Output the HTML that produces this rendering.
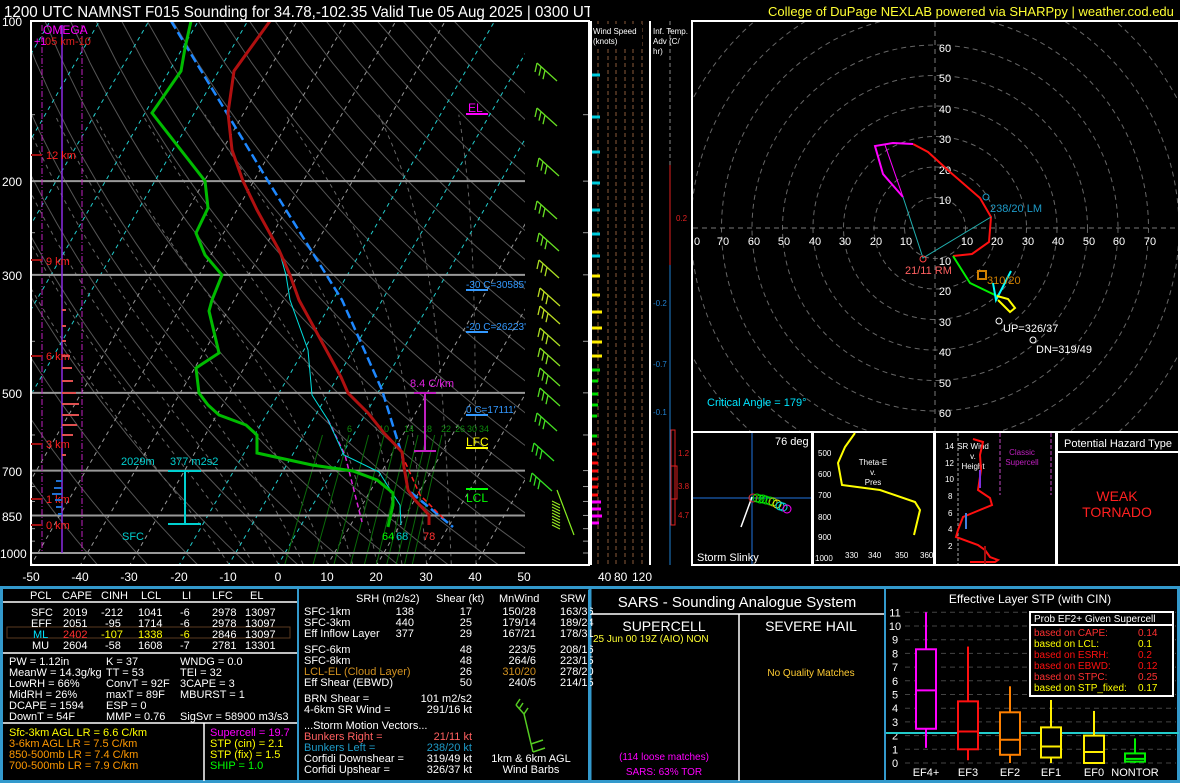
<!DOCTYPE html>
<html><head><meta charset="utf-8">
<style>
html,body{margin:0;padding:0;background:#000;}
svg{display:block;}
text{font-family:"Liberation Sans",sans-serif;}
</style></head>
<body>
<svg id="s" width="1180" height="783" viewBox="0 0 1180 783" xmlns="http://www.w3.org/2000/svg" font-size="11">
<rect width="1180" height="783" fill="#000"/>
<text x="4" y="17" fill="#fff" font-size="16" textLength="600" lengthAdjust="spacingAndGlyphs">1200 UTC NAMNST F015 Sounding for 34.78,-102.35 Valid  Tue 05 Aug 2025 | 0300 UTC</text>
<rect x="590" y="0" width="170" height="20" fill="#000"/>
<text x="768" y="16" fill="#ffff33" font-size="13">College of DuPage NEXLAB powered via SHARPpy | weather.cod.edu</text>

<g id="skew"></g>

<!-- skew-T frame -->
<rect x="31" y="21" width="558" height="544" fill="none" stroke="#fff" stroke-width="2"/>
<g fill="#fff" font-size="12">
<text x="2" y="26">100</text><text x="2" y="186">200</text><text x="2" y="280">300</text>
<text x="2" y="398">500</text><text x="2" y="476">700</text><text x="2" y="521">850</text><text x="0" y="558">1000</text>
<g text-anchor="middle"><text x="31" y="581">-50</text><text x="80" y="581">-40</text><text x="129" y="581">-30</text><text x="179" y="581">-20</text><text x="228" y="581">-10</text><text x="278" y="581">0</text><text x="327" y="581">10</text><text x="376" y="581">20</text><text x="426" y="581">30</text><text x="475" y="581">40</text><text x="524" y="581">50</text></g>
<text x="598" y="581">40</text><text x="614" y="581">80</text><text x="632" y="581">120</text>
</g>

<!-- left omega / heights -->
<line x1="42" y1="25" x2="42" y2="553" stroke="#c020c0" stroke-dasharray="6,2,1,2"/>
<line x1="82" y1="25" x2="82" y2="553" stroke="#c020c0" stroke-dasharray="6,2,1,2"/>
<line x1="62" y1="25" x2="62" y2="553" stroke="#8a2be2" stroke-width="1.5"/>
<text x="43" y="34" fill="#ff00ff" font-size="12">OMEGA</text>
<text x="34" y="45" fill="#ff00ff" font-size="11">+1</text><text x="45" y="45" fill="#e02020" font-size="11">05 km-10</text>
<g fill="#ff2020" font-size="11">
<text x="46" y="159">12 km</text><text x="46" y="265">9 km</text><text x="46" y="360">6 km</text><text x="46" y="448">3 km</text><text x="46" y="503">1 km</text><text x="46" y="529">0 km</text></g>
<g stroke="#a01010" stroke-width="2"><line x1="31" y1="155" x2="42" y2="155"/><line x1="31" y1="260" x2="42" y2="260"/><line x1="31" y1="356" x2="42" y2="356"/><line x1="31" y1="444" x2="42" y2="444"/><line x1="31" y1="499" x2="42" y2="499"/><line x1="31" y1="525" x2="42" y2="525"/></g>
<g stroke="#e05050" stroke-width="2"><line x1="62" y1="310" x2="66" y2="310"/><line x1="62" y1="326" x2="66" y2="326"/><line x1="62" y1="341" x2="66" y2="341"/><line x1="62" y1="356" x2="70" y2="356"/><line x1="62" y1="368" x2="72" y2="368"/><line x1="62" y1="381" x2="73" y2="381"/><line x1="62" y1="393" x2="76" y2="393"/><line x1="62" y1="404" x2="79" y2="404"/><line x1="62" y1="415" x2="79" y2="415"/><line x1="62" y1="425" x2="77" y2="425"/><line x1="62" y1="435" x2="73" y2="435"/><line x1="62" y1="455" x2="66" y2="455"/></g>
<g stroke="#2070d0" stroke-width="2"><line x1="56" y1="481" x2="62" y2="481"/><line x1="54" y1="488" x2="62" y2="488"/><line x1="52" y1="494" x2="62" y2="494"/><line x1="55" y1="500" x2="62" y2="500"/><line x1="56" y1="507" x2="62" y2="507"/><line x1="58" y1="514" x2="62" y2="514"/></g>

<!-- annotations -->
<text x="468" y="112" fill="#ff00ff" font-size="12">EL</text><line x1="466" y1="114" x2="488" y2="114" stroke="#ff00ff" stroke-width="2"/>
<text x="466" y="288" fill="#3399ff" font-size="10">-30 C=30585'</text><line x1="466" y1="290" x2="488" y2="290" stroke="#3399ff" stroke-width="2"/>
<text x="466" y="330" fill="#3399ff" font-size="10">-20 C=26223'</text><line x1="466" y1="332" x2="488" y2="332" stroke="#3399ff" stroke-width="2"/>
<text x="466" y="413" fill="#3399ff" font-size="10">0 C=17111'</text><line x1="466" y1="415" x2="488" y2="415" stroke="#3399ff" stroke-width="2"/>
<text x="466" y="446" fill="#ffff00" font-size="12">LFC</text><line x1="466" y1="448" x2="488" y2="448" stroke="#ffff00" stroke-width="2"/>
<text x="466" y="502" fill="#00ff00" font-size="12">LCL</text><line x1="466" y1="489" x2="488" y2="489" stroke="#00ff00" stroke-width="2"/>
<text x="410" y="387" fill="#e020e0" font-size="11">8.4 C/km</text>
<g stroke="#c020c0" stroke-width="2"><line x1="414" y1="393" x2="436" y2="393"/><line x1="425" y1="393" x2="425" y2="451"/><line x1="414" y1="451" x2="436" y2="451"/></g>
<text x="121" y="465" fill="#00d0d0" font-size="11">2029m</text><text x="170" y="465" fill="#00d0d0" font-size="11">377 m2s2</text>
<g stroke="#00d0d0" stroke-width="2"><line x1="168" y1="471" x2="201" y2="471"/><line x1="185" y1="471" x2="185" y2="524"/><line x1="168" y1="524" x2="201" y2="524"/></g>
<text x="122" y="540" fill="#00d0d0" font-size="11">SFC</text>
<text x="382" y="540" fill="#00ff00" font-size="11">64</text><text x="396" y="540" fill="#00d0d0" font-size="11">68</text><text x="423" y="540" fill="#ff3030" font-size="11">78</text>

<!-- wind speed panel -->
<line x1="591" y1="21" x2="591" y2="565" stroke="#fff" stroke-width="2"/>
<line x1="650" y1="21" x2="650" y2="565" stroke="#fff" stroke-width="2"/>
<g stroke="#8a5a3a" stroke-dasharray="4,3"><line x1="598" y1="21" x2="598" y2="565"/><line x1="608" y1="21" x2="608" y2="565"/><line x1="616" y1="21" x2="616" y2="565"/><line x1="625" y1="21" x2="625" y2="565"/><line x1="633" y1="21" x2="633" y2="565"/><line x1="642" y1="21" x2="642" y2="565"/></g>
<rect x="592" y="24" width="50" height="24" fill="#000"/>
<text x="593" y="34" fill="#fff" font-size="8">Wind Speed</text><text x="593" y="44" fill="#fff" font-size="8">(knots)</text>
<g id="ws"></g>
<!-- temp adv panel -->
<line x1="670" y1="21" x2="670" y2="565" stroke="#888" stroke-dasharray="4,3"/>
<text x="653" y="34" fill="#fff" font-size="8">Inf. Temp.</text><text x="653" y="44" fill="#fff" font-size="8">Adv (C/</text><text x="653" y="54" fill="#fff" font-size="8">hr)</text>
<line x1="670" y1="165" x2="670" y2="265" stroke="#e02020" stroke-width="1"/>
<line x1="670" y1="265" x2="670" y2="565" stroke="#2080d0" stroke-width="1"/>
<text x="676" y="221" fill="#e02020" font-size="8">0.2</text>
<text x="653" y="306" fill="#2080d0" font-size="8">-0.2</text><text x="653" y="367" fill="#2080d0" font-size="8">-0.7</text><text x="653" y="415" fill="#2080d0" font-size="8">-0.1</text>
<rect x="671" y="430" width="4" height="95" fill="none" stroke="#e02020"/>
<rect x="671" y="466" width="6" height="33" fill="none" stroke="#e02020"/>
<text x="678" y="456" fill="#e02020" font-size="8">1.2</text><text x="678" y="489" fill="#e02020" font-size="8">3.8</text><text x="678" y="518" fill="#e02020" font-size="8">4.7</text>

<!-- hodograph -->
<rect x="692" y="21" width="487" height="411" fill="none" stroke="#fff" stroke-width="2"/>
<g id="hodo"></g>
<g fill="#fff" font-size="11" text-anchor="middle">
<text x="945" y="52">60</text><text x="945" y="82">50</text><text x="945" y="113">40</text><text x="945" y="143">30</text><text x="945" y="174">20</text><text x="945" y="204">10</text>
<text x="945" y="265">10</text><text x="945" y="295">20</text><text x="945" y="326">30</text><text x="945" y="356">40</text><text x="945" y="387">50</text><text x="945" y="417">60</text>
<text x="723" y="245">70</text><text x="754" y="245">60</text><text x="784" y="245">50</text><text x="815" y="245">40</text><text x="845" y="245">30</text><text x="876" y="245">20</text><text x="906" y="245">10</text>
<text x="967" y="245">10</text><text x="997" y="245">20</text><text x="1028" y="245">30</text><text x="1058" y="245">40</text><text x="1089" y="245">50</text><text x="1119" y="245">60</text><text x="1150" y="245">70</text><text x="697" y="245">0</text>
</g>
<g fill="none" stroke-width="2">
<polyline points="953,256 972,254 989,242 991,217 980,198 950,172 928,152 913,144" stroke="#ff1010"/>
<polyline points="913,144 893,143 875,146 883,174 903,197" stroke="#ff00ff"/>
<polyline points="953,256 970,283 997,296" stroke="#00ee00"/>
<polyline points="993,283 996,300 1011,271" stroke="#00ffff"/>
<polyline points="997,296 1008,299 1015,308 1010,312 998,300" stroke="#ffff00"/>
</g>
<line x1="885" y1="145" x2="903" y2="197" stroke="#ff00ff"/>
<polyline points="903,197 923,258 991,217" fill="none" stroke="#20b0b0"/>
<circle cx="923" cy="259" r="3" fill="none" stroke="#ff4040"/>
<text x="905" y="274" fill="#ff6060">21/11 RM</text>
<circle cx="986" cy="197" r="3" fill="none" stroke="#1e9bc8"/>
<text x="990" y="212" fill="#1e9bc8">238/20 LM</text>
<rect x="978" y="271" width="8" height="8" fill="none" stroke="#d08000" stroke-width="2"/>
<text x="987" y="284" fill="#d08000">310/20</text>
<circle cx="999" cy="321" r="3" fill="none" stroke="#fff"/><text x="1003" y="332" fill="#fff">UP=326/37</text>
<circle cx="1033" cy="340" r="3" fill="none" stroke="#fff"/><text x="1036" y="353" fill="#fff">DN=319/49</text>
<text x="707" y="406" fill="#00e5ff">Critical Angle = 179°</text>

<!-- insets -->
<g fill="none" stroke="#fff" stroke-width="2">
<rect x="692" y="432" width="120" height="133"/><rect x="813" y="432" width="121" height="133"/><rect x="935" y="432" width="121" height="133"/><rect x="1057" y="432" width="122" height="133"/>
</g>
<line x1="752" y1="433" x2="752" y2="564" stroke="#103a70" stroke-width="2"/>
<line x1="693" y1="498" x2="811" y2="498" stroke="#103a70" stroke-width="2"/>
<line x1="741" y1="527" x2="752" y2="497" stroke="#fff" stroke-width="1.5"/>
<g fill="none" stroke-width="1">
<circle cx="753" cy="498" r="4" stroke="#e03030"/><circle cx="757" cy="498" r="4" stroke="#00ee00"/><circle cx="760" cy="499" r="4" stroke="#00ee00"/><circle cx="763" cy="499" r="4" stroke="#00ee00"/><circle cx="766" cy="500" r="4" stroke="#00ee00"/><circle cx="770" cy="501" r="4" stroke="#00ee00"/><circle cx="773" cy="502" r="4" stroke="#aacc00"/><circle cx="777" cy="504" r="4" stroke="#ffff00"/><circle cx="780" cy="506" r="4" stroke="#00e0e0"/><circle cx="783" cy="507" r="4" stroke="#00e0e0"/><circle cx="787" cy="509" r="4" stroke="#ff00ff"/></g>
<text x="775" y="445" fill="#fff">76 deg</text>
<text x="697" y="561" fill="#fff">Storm Slinky</text>
<polyline points="855,433 845,447 838,463 842,485 880,490 915,502 920,510 914,535" fill="none" stroke="#ffff00" stroke-width="2"/>
<g fill="#fff" font-size="8"><text x="818" y="456">500</text><text x="818" y="477">600</text><text x="818" y="498">700</text><text x="818" y="520">800</text><text x="818" y="540">900</text><text x="815" y="561">1000</text>
<text x="845" y="558">330</text><text x="868" y="558">340</text><text x="895" y="558">350</text><text x="920" y="558">360</text>
<text x="873" y="465" text-anchor="middle">Theta-E</text><text x="873" y="475" text-anchor="middle">v.</text><text x="873" y="485" text-anchor="middle">Pres</text>
<text x="945" y="449">14</text><text x="945" y="466">12</text><text x="945" y="482">10</text><text x="948" y="499">8</text><text x="948" y="516">6</text><text x="948" y="532">4</text><text x="948" y="549">2</text>
<text x="973" y="449" text-anchor="middle">SR Wind</text><text x="973" y="459" text-anchor="middle">v.</text><text x="973" y="469" text-anchor="middle">Height</text></g>
<line x1="958" y1="433" x2="958" y2="564" stroke="#aaa" stroke-dasharray="3,2"/>
<line x1="1000" y1="433" x2="1000" y2="495" stroke="#803080" stroke-dasharray="4,2" stroke-width="1.5"/>
<line x1="1051" y1="433" x2="1051" y2="495" stroke="#803080" stroke-dasharray="4,2" stroke-width="1.5"/>
<text x="1022" y="455" fill="#c020c0" font-size="8" text-anchor="middle">Classic</text><text x="1022" y="465" fill="#c020c0" font-size="8" text-anchor="middle">Supercell</text>
<polyline points="973,439 983,442 980,455 981,470 978,490 990,498 992,505 975,512 963,517 958,530 956,537 978,545 985,550 990,557 998,560 995,562 970,562" fill="none" stroke="#ff1010" stroke-width="2"/>
<line x1="966" y1="513" x2="966" y2="529" stroke="#4080e0" stroke-width="2"/>
<line x1="980" y1="470" x2="980" y2="488" stroke="#8030e0" stroke-width="2"/>
<line x1="985" y1="546" x2="985" y2="564" stroke="#a01010" stroke-width="2"/>
<text x="1118" y="447" fill="#fff" font-size="11" text-anchor="middle">Potential Hazard Type</text>
<line x1="1057" y1="452" x2="1179" y2="452" stroke="#fff" stroke-width="2"/>
<text x="1117" y="501" fill="#ff2020" font-size="14" text-anchor="middle">WEAK</text>
<text x="1117" y="517" fill="#ff2020" font-size="14" text-anchor="middle">TORNADO</text>

<!-- bottom panel -->
<rect x="1.5" y="587.5" width="1177" height="194" fill="#000" stroke="#3399cc" stroke-width="3"/>
<line x1="298" y1="587" x2="298" y2="783" stroke="#3399cc" stroke-width="2"/>
<line x1="590" y1="587" x2="590" y2="783" stroke="#3399cc" stroke-width="3"/>
<line x1="885" y1="587" x2="885" y2="783" stroke="#3399cc" stroke-width="2"/>
<g stroke="#fff" stroke-width="1.5"><line x1="3" y1="602" x2="297" y2="602"/><line x1="3" y1="653" x2="297" y2="653"/><line x1="3" y1="723" x2="297" y2="723"/><line x1="204" y1="723" x2="204" y2="781"/>
<line x1="591" y1="614" x2="884" y2="614"/><line x1="739" y1="614" x2="739" y2="781"/></g>
<rect x="7" y="627" width="283" height="11" fill="none" stroke="#5a3a20"/>
<g font-size="11" fill="#fff">
<text x="30" y="599">PCL</text><text x="62" y="599">CAPE</text><text x="101" y="599">CINH</text><text x="141" y="599">LCL</text><text x="182" y="599">LI</text><text x="212" y="599">LFC</text><text x="250" y="599">EL</text>
<text x="31" y="616">SFC</text><text x="63" y="616">2019</text><text x="101" y="616">-212</text><text x="138" y="616">1041</text><text x="180" y="616">-6</text><text x="212" y="616">2978</text><text x="245" y="616">13097</text>
<text x="31" y="627">EFF</text><text x="63" y="627">2051</text><text x="105" y="627">-95</text><text x="138" y="627">1714</text><text x="180" y="627">-6</text><text x="212" y="627">2978</text><text x="245" y="627">13097</text>
<text x="33" y="638" fill="#00e5ff">ML</text><text x="63" y="638" fill="#ff3030">2402</text><text x="101" y="638" fill="#ffff00">-107</text><text x="138" y="638" fill="#ffff00">1338</text><text x="180" y="638" fill="#ffff00">-6</text><text x="212" y="638">2846</text><text x="245" y="638">13097</text>
<text x="32" y="649">MU</text><text x="63" y="649">2604</text><text x="105" y="649">-58</text><text x="138" y="649">1608</text><text x="180" y="649">-7</text><text x="212" y="649">2781</text><text x="245" y="649">13301</text>
<text x="9" y="665">PW = 1.12in</text><text x="106" y="665">K = 37</text><text x="180" y="665">WNDG = 0.0</text>
<text x="9" y="676">MeanW = 14.3g/kg</text><text x="106" y="676">TT = 53</text><text x="180" y="676">TEI = 32</text>
<text x="9" y="687">LowRH = 66%</text><text x="106" y="687">ConvT = 92F</text><text x="180" y="687">3CAPE = 3</text>
<text x="9" y="698">MidRH = 26%</text><text x="106" y="698">maxT = 89F</text><text x="180" y="698">MBURST = 1</text>
<text x="9" y="709">DCAPE = 1594</text><text x="106" y="709">ESP = 0</text>
<text x="9" y="720">DownT = 54F</text><text x="106" y="720">MMP = 0.76</text><text x="180" y="720">SigSvr = 58900 m3/s3</text>
<text x="9" y="736" fill="#ffff00">Sfc-3km AGL LR = 6.6 C/km</text>
<text x="9" y="747" fill="#ff9900">3-6km AGL LR = 7.5 C/km</text>
<text x="9" y="758" fill="#ff9900">850-500mb LR = 7.4 C/km</text>
<text x="9" y="769" fill="#ff9900">700-500mb LR = 7.9 C/km</text>
<text x="210" y="736" fill="#ff00ff">Supercell = 19.7</text>
<text x="210" y="747" fill="#ffff00">STP (cin) = 2.1</text>
<text x="210" y="758" fill="#ffff00">STP (fix) = 1.5</text>
<text x="210" y="769" fill="#00ff00">SHIP = 1.0</text>
</g>
<g font-size="11" fill="#fff">
<text x="356" y="602">SRH (m2/s2)</text><text x="436" y="602">Shear (kt)</text><text x="499" y="602">MnWind</text><text x="560" y="602">SRW</text>
<text x="304" y="615">SFC-1km</text><text x="304" y="626">SFC-3km</text><text x="304" y="637">Eff Inflow Layer</text>
<text x="304" y="653">SFC-6km</text><text x="304" y="664">SFC-8km</text><text x="304" y="675" fill="#d09020">LCL-EL (Cloud Layer)</text><text x="304" y="686">Eff Shear (EBWD)</text>
<text x="304" y="702">BRN Shear =</text><text x="304" y="713">4-6km SR Wind =</text>
<text x="304" y="729">...Storm Motion Vectors...</text>
<text x="304" y="740" fill="#ff6060">Bunkers Right =</text><text x="304" y="751" fill="#1e9bc8">Bunkers Left =</text>
<text x="304" y="762">Corfidi Downshear =</text><text x="304" y="773">Corfidi Upshear =</text>
<g text-anchor="end">
<text x="414" y="615">138</text><text x="414" y="626">440</text><text x="414" y="637">377</text>
<text x="472" y="615">17</text><text x="472" y="626">25</text><text x="472" y="637">29</text><text x="472" y="653">48</text><text x="472" y="664">48</text><text x="472" y="675">26</text><text x="472" y="686">50</text>
<text x="536" y="615">150/28</text><text x="536" y="626">179/14</text><text x="536" y="637">167/21</text><text x="536" y="653">223/5</text><text x="536" y="664">264/6</text><text x="536" y="675" fill="#d09020">310/20</text><text x="536" y="686">240/5</text>
<text x="472" y="702">101 m2/s2</text><text x="472" y="713">291/16 kt</text>
<text x="472" y="740" fill="#ff6060">21/11 kt</text><text x="472" y="751" fill="#1e9bc8">238/20 kt</text><text x="472" y="762">319/49 kt</text><text x="472" y="773">326/37 kt</text>
</g>
<text x="560" y="615">163/36</text><text x="560" y="626">189/24</text><text x="560" y="637">178/31</text><text x="560" y="653">208/16</text><text x="560" y="664">223/15</text><text x="560" y="675">278/20</text><text x="560" y="686">214/15</text>
<text x="531" y="762" text-anchor="middle">1km &amp; 6km AGL</text><text x="531" y="773" text-anchor="middle">Wind Barbs</text>
</g>
<rect x="588" y="590" width="2" height="190" fill="#3399cc"/>
<g stroke="#55cc22" fill="none" stroke-width="1.5"><polyline points="533,752 524,714 516,705"/><line x1="516" y1="705" x2="520" y2="699"/><line x1="519" y1="709" x2="523" y2="703"/><line x1="524" y1="714" x2="528" y2="708"/><line x1="533" y1="752" x2="545" y2="748"/><line x1="531" y1="744" x2="543" y2="740"/></g>
<!-- SARS -->
<g fill="#fff" text-anchor="middle">
<text x="737" y="607" font-size="15">SARS - Sounding Analogue System</text>
<text x="664" y="631" font-size="14">SUPERCELL</text><text x="811" y="631" font-size="14">SEVERE HAIL</text>
<text x="811" y="676" font-size="10" fill="#ffcc33">No Quality Matches</text>
<text x="664" y="760" font-size="10" fill="#ff00ff">(114 loose matches)</text>
<text x="664" y="775" font-size="10" fill="#ff00ff">SARS: 63% TOR</text>
<text x="1030" y="603" font-size="12">Effective Layer STP (with CIN)</text>
</g>
<text x="593" y="642" font-size="10" fill="#ffff33">25 Jun 00 19Z (AIO)    NON</text>
<g id="stp"></g>
<rect x="1030" y="612" width="143" height="84" fill="#000" stroke="#fff" stroke-width="2"/>
<line x1="1031" y1="625" x2="1172" y2="625" stroke="#fff" stroke-width="2"/>
<g font-size="10">
<text x="1034" y="622" fill="#fff">Prob EF2+ Given Supercell</text>
<text x="1034" y="636" fill="#ff3030">based on CAPE:</text><text x="1138" y="636" fill="#ff3030">0.14</text>
<text x="1034" y="647" fill="#ffff00">based on LCL:</text><text x="1138" y="647" fill="#ffff00">0.1</text>
<text x="1034" y="658" fill="#ff1010">based on ESRH:</text><text x="1138" y="658" fill="#ff1010">0.2</text>
<text x="1034" y="669" fill="#ff1010">based on EBWD:</text><text x="1138" y="669" fill="#ff1010">0.12</text>
<text x="1034" y="680" fill="#ff3030">based on STPC:</text><text x="1138" y="680" fill="#ff3030">0.25</text>
<text x="1034" y="691" fill="#ffff00">based on STP_fixed:</text><text x="1138" y="691" fill="#ffff00">0.17</text>
</g>
</svg>
<script>
var NS="http://www.w3.org/2000/svg";
function el(p,t,a){var e=document.createElementNS(NS,t);for(var k in a)e.setAttribute(k,a[k]);p.appendChild(e);return e;}
function Y(p){return 21+532*Math.log10(p/100);}
function X(T,p){return 278+4.94*T+0.58*(565-Y(p));}
var sk=document.getElementById('skew');
el(sk,'clipPath',{id:'cp'}).appendChild(document.createElementNS(NS,'rect'));
var cr=sk.querySelector('clipPath rect');cr.setAttribute('x',31);cr.setAttribute('y',21);cr.setAttribute('width',494);cr.setAttribute('height',544);
var g=el(sk,'g',{'clip-path':'url(#cp)'});
for(var th=-40;th<=200;th+=10){var pts=[];for(var p=1060;p>=100;p-=20){var T=(th+273.15)*Math.pow(p/1000,0.286)-273.15;pts.push(X(T,p).toFixed(1)+','+Y(p).toFixed(1));}
el(g,'polyline',{points:pts.join(' '),fill:'none',stroke:'#555','stroke-width':1});}
function es(T){return 6.112*Math.exp(17.67*T/(T+243.5));}
for(var t0=-10;t0<=40;t0+=5){var T=t0,pts=[];for(var p=1050;p>=150;p-=10){pts.push(X(T,p).toFixed(1)+','+Y(p).toFixed(1));var Tk=T+273.15,e=es(T),w=0.622*e/(p-e),Lv=2.5e6;var G=(287*Tk+Lv*w)/(1004+Lv*Lv*w*0.622/(287*Tk*Tk))/p;T-=G*10;}
el(g,'polyline',{points:pts.join(' '),fill:'none',stroke:'#666','stroke-dasharray':'4,4','stroke-width':1});}
for(var T=-120;T<=50;T+=10){
el(g,'line',{x1:X(T,1060),y1:Y(1060),x2:X(T,100),y2:Y(100),stroke:(T<=0&&T>=-20)||T<=-70?'#22cccc':'#999','stroke-dasharray':'4,4','stroke-width':1});}
[4,6,8,10,12,14,16,18,20,22].forEach(function(w,i){var pts=[];[1060,600].forEach(function(p){var e=w*p/(622+w),l=Math.log(e/6.112);var Td=243.5*l/(17.67-l);pts.push([X(Td,p),Y(p)]);});
el(g,'line',{x1:pts[0][0],y1:pts[0][1],x2:pts[1][0],y2:pts[1][1],stroke:'#0a6a0a','stroke-width':1});});
var lx=[352,384,409,427,446,460,472,484],lt=['6','10','14','18','22','26','30','34'];
lx.forEach(function(x,i){var t=el(g,'text',{x:x-5,y:432,fill:'#0c8a0c','font-size':9});t.textContent=lt[i];});
[200,300,500,700,850,1000].forEach(function(p){el(g,'line',{x1:31,y1:Y(p),x2:525,y2:Y(p),stroke:'#999','stroke-width':2});});
[150,250,400,600,750,800,900,950].forEach(function(p){el(sk,'line',{x1:31,y1:Y(p),x2:35,y2:Y(p),stroke:'#999'});el(sk,'line',{x1:583,y1:Y(p),x2:589,y2:Y(p),stroke:'#999'});});
[200,300,500,700,850,1000].forEach(function(p){el(sk,'line',{x1:583,y1:Y(p),x2:589,y2:Y(p),stroke:'#999'});});
el(g,'polyline',{points:'328,420 345,455 362,522',fill:'none',stroke:'#dd22dd','stroke-dasharray':'5,3','stroke-width':1.5});
el(g,'polyline',{points:'232,150 243,181 257,210 279,250 286,275 290,300 308,350 312,395 328,420 344,455 379,472 400,505 401,525',fill:'none',stroke:'#00e0e0','stroke-width':1});
el(g,'polyline',{points:'171,21 268,181 342,300 382,390 402,455 408,490 453,527',fill:'none',stroke:'#1e88ff','stroke-dasharray':'9,4','stroke-width':2.5});
el(g,'polyline',{points:'402,455 420,495 445,520',fill:'none',stroke:'#ff2020','stroke-dasharray':'5,3','stroke-width':1.5});
el(g,'polyline',{points:'270,21 234,71 228,113 232,150 243,181 257,210 279,250 290,275 299,300 317,333 341,377 348,393 368,413 384,433 402,452 404,467 408,490 415,500 429,515 429,525',fill:'none',stroke:'#b01010','stroke-width':3});
el(g,'polyline',{points:'191,21 185,48 181,71 152,113 205,181 208,208 196,233 205,255 222,275 212,300 209,311 219,353 196,368 199,393 208,405 219,415 246,425 257,435 257,453 312,465 353,471 377,480 393,493 393,505 388,527',fill:'none',stroke:'#00bb00','stroke-width':3});
var bar=[[545,75,'#66dd22'],[545,120,'#66dd22'],[547,170,'#66dd22'],[545,213,'#66dd22'],[547,245,'#66dd22'],[547,272,'#aadd22'],[548,300,'#bbdd22'],[548,318,'#bbdd22'],[548,340,'#aadd22'],[548,360,'#88dd22'],[548,380,'#66dd22'],[548,400,'#55dd22'],[545,425,'#44dd22'],[542,455,'#33dd22'],[540,485,'#33dd22']];
bar.forEach(function(b){var x=b[0],y=b[1],c=b[2];el(sk,'line',{x1:x-8,y1:y-12,x2:x+12,y2:y+6,stroke:c,'stroke-width':1.3});
for(var k=0;k<3;k++){var bx=x-8+k*4,by=y-12+k*3.6;el(sk,'line',{x1:bx,y1:by,x2:bx-2,y2:by+9,stroke:c,'stroke-width':1.3});}});
for(var y=505;y<=530;y+=3){el(sk,'line',{x1:560,y1:y,x2:552,y2:y-4,stroke:'#99ee22','stroke-width':1});}
el(sk,'line',{x1:557,y1:490,x2:574,y2:535,stroke:'#88ee22','stroke-width':1.2});
var wt=[[75,'#00ccdd',8],[117,'#00ccdd',8],[152,'#00ccdd',8],[183,'#00ccdd',8],[210,'#00ccdd',8],[234,'#00ccdd',8],[256,'#00ccdd',8],[276,'#ffee00',8],[295,'#ffee00',8],[312,'#ffee00',10],[328,'#ffee00',10],[342,'#ffee00',10],[356,'#ffee00',10],[370,'#00dd00',8],[381,'#00dd00',6],[394,'#00dd00',6],[405,'#00dd00',6],[416,'#00dd00',5],[436,'#00dd00',5],[444,'#ff1010',4],[454,'#ff1010',5],[463,'#ff1010',6],[471,'#ff1010',6],[479,'#ff1010',6],[487,'#ff1010',6],[495,'#ff1010',6],[502,'#ff00ff',9],[509,'#ff00ff',9],[516,'#ff00ff',10],[523,'#ff00ff',7]];
var wsg=document.getElementById('ws');wt.forEach(function(t){el(wsg,'line',{x1:592,y1:t[0],x2:592+t[2],y2:t[0],stroke:t[1],'stroke-width':3});});
var h=document.getElementById('hodo');var hc=el(h,'clipPath',{id:'hc'});el(hc,'rect',{x:693,y:22,width:485,height:409});
var hg=el(h,'g',{'clip-path':'url(#hc)'});
for(var r=1;r<=9;r++)el(hg,'circle',{cx:935,cy:228,r:r*30.5,fill:'none',stroke:'#666','stroke-dasharray':'5,4'});
el(hg,'line',{x1:693,y1:228,x2:1178,y2:228,stroke:'#777','stroke-dasharray':'5,4'});
el(hg,'line',{x1:935,y1:22,x2:935,y2:431,stroke:'#777','stroke-dasharray':'5,4'});
var s=document.getElementById('stp');function sy(v){return 763-v*13.7;}
for(var v=0;v<=11;v++){el(s,'line',{x1:905,y1:sy(v),x2:1176,y2:sy(v),stroke:'#444','stroke-dasharray':'5,4'});var t=el(s,'text',{x:895,y:sy(v)+4,fill:'#fff','font-size':11,'text-anchor':'middle'});t.textContent=v;}
el(s,'line',{x1:886,y1:733,x2:1179,y2:733,stroke:'#22cccc','stroke-width':2});
var bx=[[926,'#ff00ff',1.1,2.5,5.3,8.3,11,'EF4+'],[968,'#ff1010',0.2,1,2.3,4.5,8.5,'EF3'],[1010,'#ff8000',0,0.6,1.7,3.7,5.6,'EF2'],[1051,'#ffee00',0,0.4,1.2,2.6,4.6,'EF1'],[1094,'#ffee00',0,0,0.8,2,3.8,'EF0'],[1135,'#00ee00',0,0.1,0.3,0.7,1.8,'NONTOR']];
bx.forEach(function(b){var x=b[0],c=b[1];el(s,'line',{x1:x,y1:sy(b[2]),x2:x,y2:sy(b[6]),stroke:c,'stroke-width':2});
el(s,'rect',{x:x-10,y:sy(b[5]),width:20,height:sy(b[3])-sy(b[5]),fill:'#000',stroke:c,'stroke-width':2});
el(s,'line',{x1:x-10,y1:sy(b[4]),x2:x+10,y2:sy(b[4]),stroke:c,'stroke-width':2});
var t=el(s,'text',{x:x,y:776,fill:'#fff','font-size':11,'text-anchor':'middle'});t.textContent=b[7];});
</script>
</body></html>
